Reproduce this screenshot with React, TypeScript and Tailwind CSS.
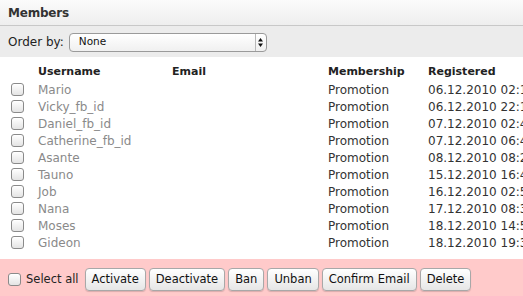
import React from "react";

const rows = [
  ["Mario", "06.12.2010 02:14"],
  ["Vicky_fb_id", "06.12.2010 22:18"],
  ["Daniel_fb_id", "07.12.2010 02:45"],
  ["Catherine_fb_id", "07.12.2010 06:49"],
  ["Asante", "08.12.2010 08:26"],
  ["Tauno", "15.12.2010 16:44"],
  ["Job", "16.12.2010 02:56"],
  ["Nana", "17.12.2010 08:31"],
  ["Moses", "18.12.2010 14:52"],
  ["Gideon", "18.12.2010 19:31"],
];

function Box() {
  return (
    <span className="inline-block w-[13px] h-[13px] rounded-[3px] border border-[#8a8a8a] bg-gradient-to-b from-white to-[#e4e4e4] shadow-[inset_0_1px_0_#fff]" />
  );
}

function Btn({ children }: { children: React.ReactNode }) {
  return (
    <button className="h-[23px] px-[6px] rounded-[4px] border border-[#a8a8a8] bg-gradient-to-b from-white to-[#e6e6e6] text-[11.5px] text-[#111] leading-none shadow-[0_1px_1px_rgba(0,0,0,0.15)]">
      {children}
    </button>
  );
}

export default function App() {
  return (
    <div
      className="w-[523px] h-[296px] overflow-hidden bg-white flex flex-col"
      style={{ fontFamily: '"DejaVu Sans", Verdana, sans-serif' }}
    >
      <div className="h-[26px] shrink-0 bg-gradient-to-b from-[#fbfbfb] to-[#eeeeee] border-b border-[#c8c8c8] flex items-center px-[8px]">
        <span className="text-[12px] font-bold text-[#333] tracking-[-0.2px]">Members</span>
      </div>
      <div className="h-[31px] shrink-0 bg-[#ececec] flex items-center pl-[8px] gap-[5px] pt-[1px]">
        <span className="text-[12px] text-[#222]">Order by:</span>
        <div className="w-[198px] h-[19px] rounded-[4px] border border-[#9a9a9a] bg-gradient-to-b from-white to-[#f0f0f0] flex items-center">
          <span className="flex-1 text-[10.5px] text-[#111] pl-[9px]">None</span>
          <div className="w-[11px] h-full border-l border-[#b8b8b8] flex items-center justify-center">
            <svg width="5" height="9" viewBox="0 0 5 9">
              <path d="M2.5 0L5 3.5H0Z" fill="#111" />
              <path d="M2.5 9L5 5.5H0Z" fill="#111" />
            </svg>
          </div>
        </div>
      </div>
      <div className="flex-1 pt-[7px] overflow-hidden">
        <div className="flex h-[17px] items-center font-bold text-[#222] text-[11px]">
          <span className="w-[38px] shrink-0" />
          <span className="w-[134px] shrink-0">Username</span>
          <span className="w-[156px] shrink-0">Email</span>
          <span className="w-[100px] shrink-0">Membership</span>
          <span className="whitespace-nowrap shrink-0">Registered</span>
        </div>
        {rows.map(([u, d]) => (
          <div key={u} className="flex h-[17px] items-center text-[12px]">
            <span className="w-[38px] shrink-0 pl-[11px] flex items-center">
              <Box />
            </span>
            <span className="w-[134px] shrink-0 text-[#8a8a8a]">{u}</span>
            <span className="w-[156px] shrink-0" />
            <span className="w-[100px] shrink-0 text-[#333]">Promotion</span>
            <span className="whitespace-nowrap shrink-0 text-[#333]">{d}</span>
          </div>
        ))}
      </div>
      <div className="h-[37px] shrink-0 bg-[#ffcaca] flex items-center pl-[8px] pt-[4px] gap-[3px]">
        <span className="flex items-center gap-[5px] mr-[3px]">
          <Box />
          <span className="text-[11.5px] text-[#222]">Select all</span>
        </span>
        <Btn>Activate</Btn>
        <Btn>Deactivate</Btn>
        <Btn>Ban</Btn>
        <Btn>Unban</Btn>
        <Btn>Confirm Email</Btn>
        <Btn>Delete</Btn>
      </div>
    </div>
  );
}
